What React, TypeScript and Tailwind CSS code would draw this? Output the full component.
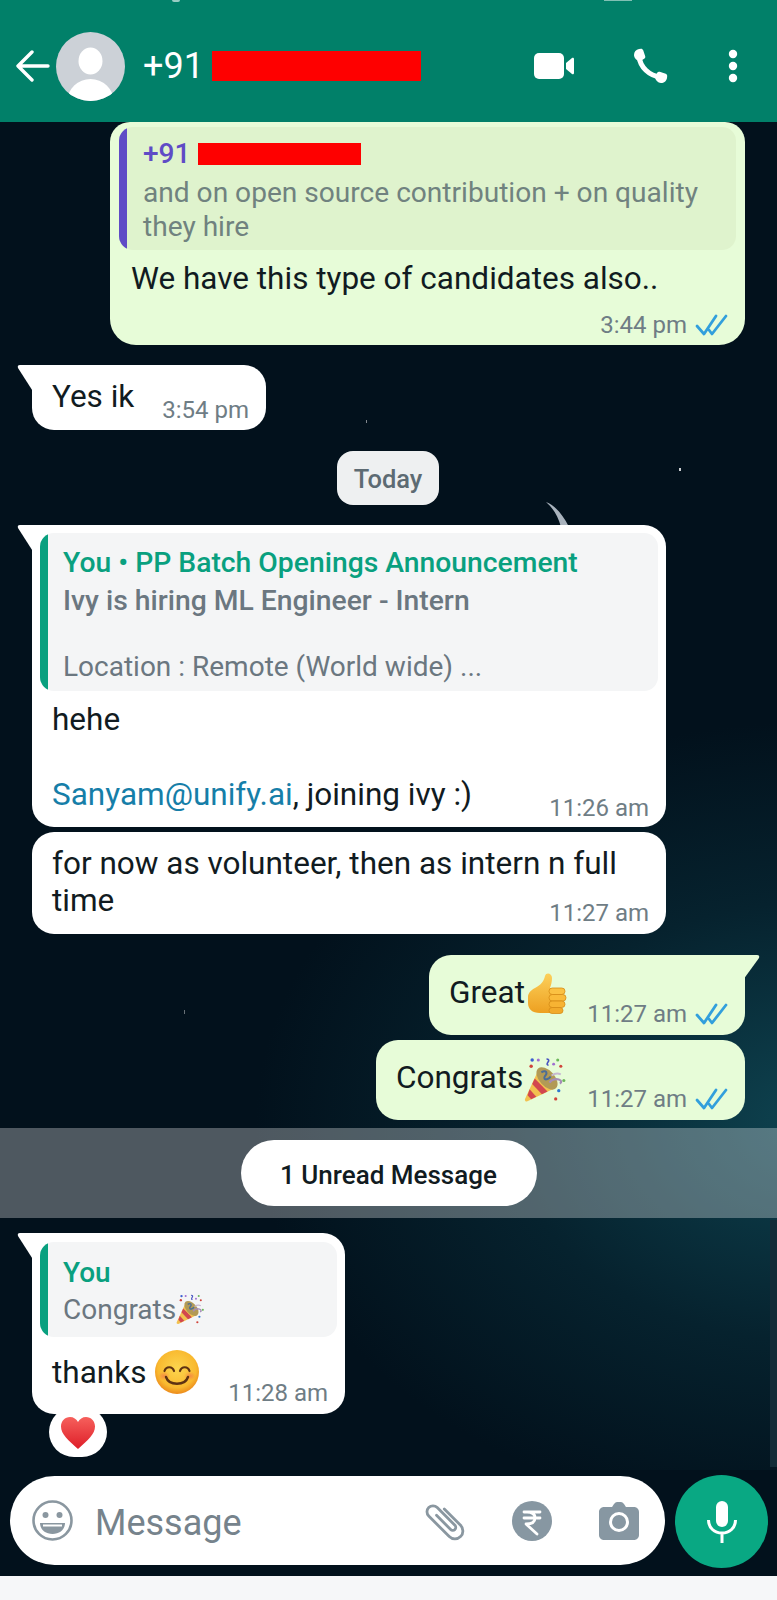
import React from "react";

const Ticks = () => (
  <svg width="33" height="22" viewBox="0 0 33 22" fill="none" stroke="#329fdc" strokeWidth="2.800" strokeLinecap="round" strokeLinejoin="round">
    <path d="M2 12l7 8L21 2" />
    <path d="M14 16l3 4L31 2" />
  </svg>
);

const TailLeft = () => (
  <svg className="absolute left-[-15px] top-0" width="17" height="28" viewBox="0 0 17 28">
    <path d="M17 0H3Q0 0 1 3L17 28Z" fill="#fff" />
  </svg>
);

const TailRight = () => (
  <svg className="absolute right-[-15px] top-0" width="17" height="28" viewBox="0 0 17 28">
    <path d="M0 0H14Q17 0 16 3L0 25Z" fill="#e7fcd8" />
  </svg>
);

const Thumb = () => (
  <svg width="40" height="42" viewBox="0 0 40 42" className="shrink-0">
    <defs>
      <linearGradient id="th" x1="0" y1="0" x2="0" y2="1">
        <stop offset="0" stopColor="#fcd05a" />
        <stop offset="1" stopColor="#eda021" />
      </linearGradient>
    </defs>
    <path d="M1 24c0-4 3-7 7-9 6-3 9-7 10-12 1-4 7-3 7 2 0 4-1 7-2 10h6v25H13C5 40 1 36 1 30Z" fill="url(#th)" />
    <rect x="22" y="15" width="16" height="6.500" rx="3.200" fill="#fbc142" stroke="#d68c17" strokeWidth=".8" />
    <rect x="22" y="21.500" width="17" height="6.500" rx="3.200" fill="#fabb3a" stroke="#d68c17" strokeWidth=".8" />
    <rect x="22" y="28" width="16" height="6.500" rx="3.200" fill="#f7b333" stroke="#d68c17" strokeWidth=".8" />
    <rect x="22" y="34.500" width="14" height="6" rx="3" fill="#f2aa2b" stroke="#d68c17" strokeWidth=".8" />
  </svg>
);

const Popper = ({ s = 45 }: { s?: number }) => (
  <svg width={s} height={s} viewBox="0 0 45 45" className="shrink-0">
    <path d="M14 13 1 41c-.6 1.600.8 3 2.400 2.400L31 30Z" fill="#f2c14f" />
    <path d="M10.500 21 23 33.800l-5.500 2.700L8 26.500Z" fill="#d2474f" />
    <path d="M5.500 31.500 12 39l-5 2.300-3.500-4Z" fill="#d2474f" />
    <ellipse cx="22.500" cy="21" rx="7.500" ry="13" transform="rotate(-42 22.500 21)" fill="#b29a55" />
    <path d="M17 15c3-2 5-1 5 1s-3 3-2 5 5 0 6-2" stroke="#4c6d96" strokeWidth="2" fill="none" />
    <path d="M25 25c2-3 6-4 9-3 3 1 3 3 1 4" stroke="#a78db8" strokeWidth="2.200" fill="none" />
    <path d="M27 18c3-2 7-2 9-1" stroke="#c7b9d1" strokeWidth="1.800" fill="none" />
    <path d="M22 2c2 0 3 1 1.500 3s-1 3 .5 3" stroke="#4a55c0" strokeWidth="1.600" fill="none" />
    <circle cx="8" cy="3" r="1.700" fill="#3d5fd0" />
    <circle cx="14" cy="3" r="1.500" fill="#a06fd0" />
    <circle cx="7" cy="9" r="1.700" fill="#d0443a" />
    <circle cx="33" cy="3" r="1.500" fill="#6db85a" />
    <circle cx="29" cy="7" r="1.400" fill="#a06fd0" />
    <circle cx="36" cy="9" r="1.500" fill="#d0443a" />
    <circle cx="39" cy="23" r="1.500" fill="#6db85a" />
    <circle cx="34" cy="33" r="1.600" fill="#2f78d0" />
    <circle cx="31" cy="41" r="1.600" fill="#d0443a" />
  </svg>
);

const Smile = () => (
  <svg width="44" height="44" viewBox="0 0 44 44" className="shrink-0">
    <defs>
      <radialGradient id="sm" cx=".5" cy=".42" r=".58">
        <stop offset="0" stopColor="#fbd64f" />
        <stop offset=".75" stopColor="#f9b92f" />
        <stop offset="1" stopColor="#ec8a1b" />
      </radialGradient>
      <radialGradient id="ch">
        <stop offset="0" stopColor="#f2704a" stopOpacity=".65" />
        <stop offset="1" stopColor="#f2704a" stopOpacity="0" />
      </radialGradient>
    </defs>
    <circle cx="22" cy="22" r="22" fill="url(#sm)" />
    <ellipse cx="9" cy="26" rx="6" ry="4.500" fill="url(#ch)" />
    <ellipse cx="35" cy="26" rx="6" ry="4.500" fill="url(#ch)" />
    <path d="M9.500 21c1.500-5 8-5 9.500 0M25 21c1.500-5 8-5 9.500 0" stroke="#5e3212" strokeWidth="2.200" fill="none" strokeLinecap="round" />
    <path d="M11 27c3 9 19 9 22 0" stroke="#5e3212" strokeWidth="2.400" fill="none" strokeLinecap="round" />
  </svg>
);

const Heart = () => (
  <svg width="34" height="32" viewBox="0 0 34 32">
    <defs>
      <linearGradient id="he" x1="0" y1="0" x2="0" y2="1">
        <stop offset="0" stopColor="#f6605c" />
        <stop offset="1" stopColor="#de1e28" />
      </linearGradient>
    </defs>
    <path d="M17 32C7 23 0 17 0 9.500 0 4 4 0 9 0c3.500 0 6.500 2 8 5 1.500-3 4.500-5 8-5 5 0 9 4 9 9.500C34 17 27 23 17 32Z" fill="url(#he)" />
  </svg>
);

const Time = ({ t, ticks }: { t: string; ticks?: boolean }) => (
  <span className="flex items-center gap-[8px] shrink-0 text-[24px] leading-[30px] text-[#6f7d85]">
    {t}
    {ticks && <Ticks />}
  </span>
);

export default function App() {
  return (
    <div className="relative flex h-[1600px] w-[777px] flex-col overflow-hidden bg-[#02111c] font-[Roboto,sans-serif] text-[31.5px] leading-[40px] text-[#111b21]">
      <header className="relative z-10 flex h-[122px] shrink-0 items-center bg-[#018069] pl-[16px] pt-[10px] text-white">
        <span className="absolute left-[172px] top-0 h-[2px] w-[8px] rounded-b bg-white/60" />
        <span className="absolute left-[604px] top-0 h-[1px] w-[28px] bg-white/50" />
        <svg width="34" height="32" viewBox="0 0 34 32" fill="none" stroke="#fff" strokeWidth="3.400" strokeLinecap="round" strokeLinejoin="round">
          <path d="M32 16H3M16 2 2 16l14 14" />
        </svg>
        <svg className="ml-[6px]" width="69" height="69" viewBox="0 0 69 69">
          <defs>
            <clipPath id="av"><circle cx="34.500" cy="34.500" r="34.500" /></clipPath>
          </defs>
          <g clipPath="url(#av)">
            <rect width="69" height="69" fill="#ccd1d7" />
            <ellipse cx="34.500" cy="29" rx="12" ry="13.500" fill="#fff" />
            <ellipse cx="34.500" cy="69" rx="23" ry="22" fill="#fff" />
          </g>
        </svg>
        <span className="ml-[18px] w-[69px] text-[36px] font-normal leading-[40px]">+91</span>
        <span className="h-[30px] w-[209px] bg-[#fe0000]" />
        <svg className="ml-[113px]" width="40" height="26" viewBox="0 0 40 26" fill="#fff">
          <rect x="0" y="0" width="30" height="26" rx="5" />
          <path d="M32 10 38 5c.8-.6 2-.2 2 1v14c0 1.200-1.200 1.600-2 1l-6-5Z" />
        </svg>
        <svg className="ml-[58px]" width="36" height="36" viewBox="0 0 36 36" fill="none">
          <path d="M7 8C8 19 17 28 29 29" stroke="#fff" strokeWidth="5" strokeLinecap="round" />
          <path d="M2 7c0-3 2-5.500 5-6l2-.2c1 0 1.800.6 2.200 1.500l2 6c.3 1-.1 2-1 2.500L8.500 13C5 13 2 10 2 7Z" fill="#fff" />
          <path d="M29 35c3 0 5.500-2 6-5l.2-2c0-1-.6-1.800-1.500-2.200l-6-2c-1-.3-2 .1-2.500 1L23 28.500C23 32 26 35 29 35Z" fill="#fff" />
        </svg>
        <svg className="ml-[59px]" width="12" height="34" viewBox="0 0 12 34" fill="#fff">
          <circle cx="6" cy="5" r="4.200" />
          <circle cx="6" cy="17" r="4.200" />
          <circle cx="6" cy="29" r="4.200" />
        </svg>
      </header>

      <main className="relative flex min-h-0 flex-1 flex-col bg-[radial-gradient(ellipse_560px_400px_at_105%_1000px,#0e4350_0%,#06222e_55%,#02111c_100%)]">
        <svg className="absolute left-[546px] top-[380px]" width="30" height="25" viewBox="0 0 30 25">
          <path d="M0 0C8 3 16 11 23 25H15C12 14 7 6 0 0Z" fill="#a9b3bd" />
        </svg>
        <span className="absolute left-[366px] top-[298px] h-[3px] w-[1px] bg-white/50" />
        <span className="absolute left-[679px] top-[346px] h-[3px] w-[2px] bg-white/80" />
        <span className="absolute left-[184px] top-[888px] h-[4px] w-[1px] bg-white/40" />
        <span className="absolute right-0 top-[1098px] h-[247px] w-[7px] bg-[#122c37]" />

        <section className="ml-[110px] w-[635px] rounded-b-[26px] rounded-t-[20px] bg-[#e7fcd8] px-[9px] pb-[5px] pt-[5px]">
          <div className="flex h-[123px] overflow-hidden rounded-[14px] bg-[#dff3cd]">
            <span className="w-[8px] shrink-0 rounded-l-[14px] bg-[#5f4bc6]" />
            <div className="pl-[16px] pt-[10px] text-[28.1px] leading-[33.5px] text-[#70827f]">
              <div className="flex h-[34px] items-center font-medium text-[#5f4bc6]">
                <span className="w-[55px]">+91</span>
                <span className="h-[22px] w-[163px] bg-[#fe0000]" />
              </div>
              <div className="mt-[5px]">and on open source contribution + on quality</div>
              <div>they hire</div>
            </div>
          </div>
          <div className="mt-[9px] pl-[12px]">We have this type of candidates also..</div>
          <div className="mt-[11px] flex justify-end pr-[8px]"><Time t="3:44 pm" ticks /></div>
        </section>

        <section className="relative ml-[32px] mt-[20px] flex h-[65px] w-[234px] justify-between rounded-[22px] rounded-tl-none bg-white pl-[20px] pr-[17px] pt-[12px]">
          <TailLeft />
          <span>Yes ik</span>
          <span className="mt-[18px]"><Time t="3:54 pm" /></span>
        </section>

        <div className="ml-[337px] mt-[21px] flex h-[54px] w-[102px] items-center justify-center rounded-[16px] bg-[#eef0f1] pt-[1px] text-[25.5px] font-medium text-[#5d6b73]">Today</div>

        <section className="relative ml-[32px] mt-[20px] h-[302px] w-[634px] rounded-[22px] rounded-tl-none bg-white px-[8px] pt-[8px]">
          <TailLeft />
          <div className="flex h-[158px] overflow-hidden rounded-[14px] bg-[#f4f5f6]">
            <span className="w-[8px] shrink-0 rounded-l-[14px] bg-[#09a07f]" />
            <div className="pl-[15px] pt-[11px] text-[28px] leading-[38px] text-[#6b7780]">
              <div className="text-[28.3px] font-medium text-[#09a07f]">You • PP Batch Openings Announcement</div>
              <div className="text-[28.3px] font-medium">Ivy is hiring ML Engineer - Intern</div>
              <div className="mt-[28px]">Location : Remote (World wide) ...</div>
            </div>
          </div>
          <div className="mt-[9px] pl-[12px]">hehe</div>
          <div className="mt-[35px] flex items-end justify-between pl-[12px] pr-[9px]">
            <span><span className="text-[#167ea8]">Sanyam@unify.ai</span>, joining ivy :)</span>
            <span className="translate-y-[8px]"><Time t="11:26 am" /></span>
          </div>
        </section>

        <section className="ml-[32px] mt-[5px] h-[102px] w-[634px] rounded-[22px] bg-white pl-[20px] pr-[17px] pt-[13px] leading-[37px]">
          <div>for now as volunteer, then as intern n full</div>
          <div className="flex items-end justify-between">
            <span>time</span>
            <span className="translate-y-[9px]"><Time t="11:27 am" /></span>
          </div>
        </section>

        <section className="relative ml-[429px] mt-[21px] flex h-[80px] w-[316px] items-start rounded-[22px] rounded-tr-none bg-[#e7fcd8] pl-[20px] pr-[17px] pt-[18px]">
          <TailRight />
          <span>Great</span>
          <span className="ml-[2px]"><Thumb /></span>
          <span className="ml-auto mt-[26px]"><Time t="11:27 am" ticks /></span>
        </section>

        <section className="ml-[376px] mt-[5px] flex h-[80px] w-[369px] items-start rounded-[22px] bg-[#e7fcd8] pl-[20px] pr-[17px] pt-[18px]">
          <span>Congrats</span>
          <span className="-mt-[1px] ml-[1px]"><Popper s={46} /></span>
          <span className="ml-auto mt-[26px]"><Time t="11:27 am" ticks /></span>
        </section>

        <div className="mt-[8px] flex h-[90px] items-center justify-center bg-white/30">
          <span className="flex h-[66px] w-[296px] items-center justify-center rounded-full bg-white pt-[3px] text-[26px] font-medium text-[#111b21]">1 Unread Message</span>
        </div>

        <section className="relative ml-[32px] mt-[15px] h-[181px] w-[313px] rounded-[22px] rounded-tl-none bg-white px-[8px] pt-[9px]">
          <TailLeft />
          <div className="flex h-[95px] overflow-hidden rounded-[14px] bg-[#f4f5f6]">
            <span className="w-[8px] shrink-0 rounded-l-[14px] bg-[#09a07f]" />
            <div className="pl-[15px] pt-[12px] text-[28px] leading-[37px] text-[#6b7780]">
              <div className="font-medium text-[#09a07f]">You</div>
              <div className="flex items-center">Congrats<Popper s={31} /></div>
            </div>
          </div>
          <div className="mt-[9px] flex items-start pl-[12px] pr-[9px]">
            <span className="mt-[7px]">thanks</span>
            <span className="ml-[9px] mt-[4px]"><Smile /></span>
            <span className="ml-auto mt-[32px]"><Time t="11:28 am" /></span>
          </div>
          <div className="absolute left-[17px] top-[174px] flex h-[50px] w-[58px] items-center justify-center rounded-full bg-white pt-[1px]"><Heart /></div>
        </section>
      </main>

      <div className="relative flex h-[106px] shrink-0 items-start bg-[#02111c] pl-[10px] pt-[6px]">
        <div className="flex h-[89px] w-[655px] items-center rounded-full bg-white pl-[22px]">
          <svg width="41" height="41" viewBox="0 0 41 41" fill="none">
            <circle cx="20.500" cy="20.500" r="19" stroke="#8a97a0" strokeWidth="2.600" />
            <circle cx="13.500" cy="15" r="3" fill="#8a97a0" />
            <circle cx="27.500" cy="15" r="3" fill="#8a97a0" />
            <path d="M8 23h25c0 7-6 11-12.500 11S8 30 8 23Z" fill="#8a97a0" />
            <path d="M11 25.500h19" stroke="#fff" strokeWidth="2" />
          </svg>
          <span className="ml-[22px] w-[147px] pt-[4px] text-[36px] text-[#76838c]">Message</span>
          <svg className="ml-[182px]" width="42" height="40" viewBox="0 0 42 40" fill="none" stroke="#8a97a0" strokeWidth="2.800" strokeLinecap="round">
            <g transform="translate(21 20) rotate(-45)">
              <path d="M8 -9V14a8 8 0 0 1-16 0V-15a6 6 0 0 1 12 0V10a3 3 0 0 1-6 0V-10" />
            </g>
          </svg>
          <svg className="ml-[46px]" width="40" height="40" viewBox="0 0 40 40" fill="none">
            <circle cx="20" cy="20" r="20" fill="#8797a2" />
            <path d="M12 11h16M12 17h16M15 11c6 0 8 2.500 8 6s-3 6-9 6l11 10" stroke="#fff" strokeWidth="2.800" strokeLinecap="round" strokeLinejoin="round" />
          </svg>
          <svg className="ml-[47px]" width="40" height="38" viewBox="0 0 40 38">
            <path d="M5 5h7c1 0 1.500-.5 2-1.500l1-1.500C16 .7 17 0 18 0h4c1 0 2 .7 3 2l1 1.500c.5 1 1 1.500 2 1.500h7c2.800 0 5 2.200 5 5v23c0 2.800-2.200 5-5 5H5c-2.800 0-5-2.200-5-5V10c0-2.800 2.200-5 5-5Z" fill="#8797a2" />
            <circle cx="20" cy="20" r="8.500" fill="none" stroke="#fff" strokeWidth="3" />
          </svg>
        </div>
        <div className="ml-[10px] flex h-[93px] w-[93px] -translate-y-[1px] items-center justify-center rounded-full bg-[#09a883]">
          <svg width="30" height="42" viewBox="0 0 30 42" fill="none">
            <rect x="9" y="0" width="12" height="26" rx="6" fill="#fff" />
            <path d="M1.500 19c0 8 6 13 13.500 13s13.500-5 13.500-13M15 32v10" stroke="#fff" strokeWidth="3" />
          </svg>
        </div>
      </div>
      <div className="h-[24px] shrink-0 bg-[#f6f7f9]" />
    </div>
  );
}
